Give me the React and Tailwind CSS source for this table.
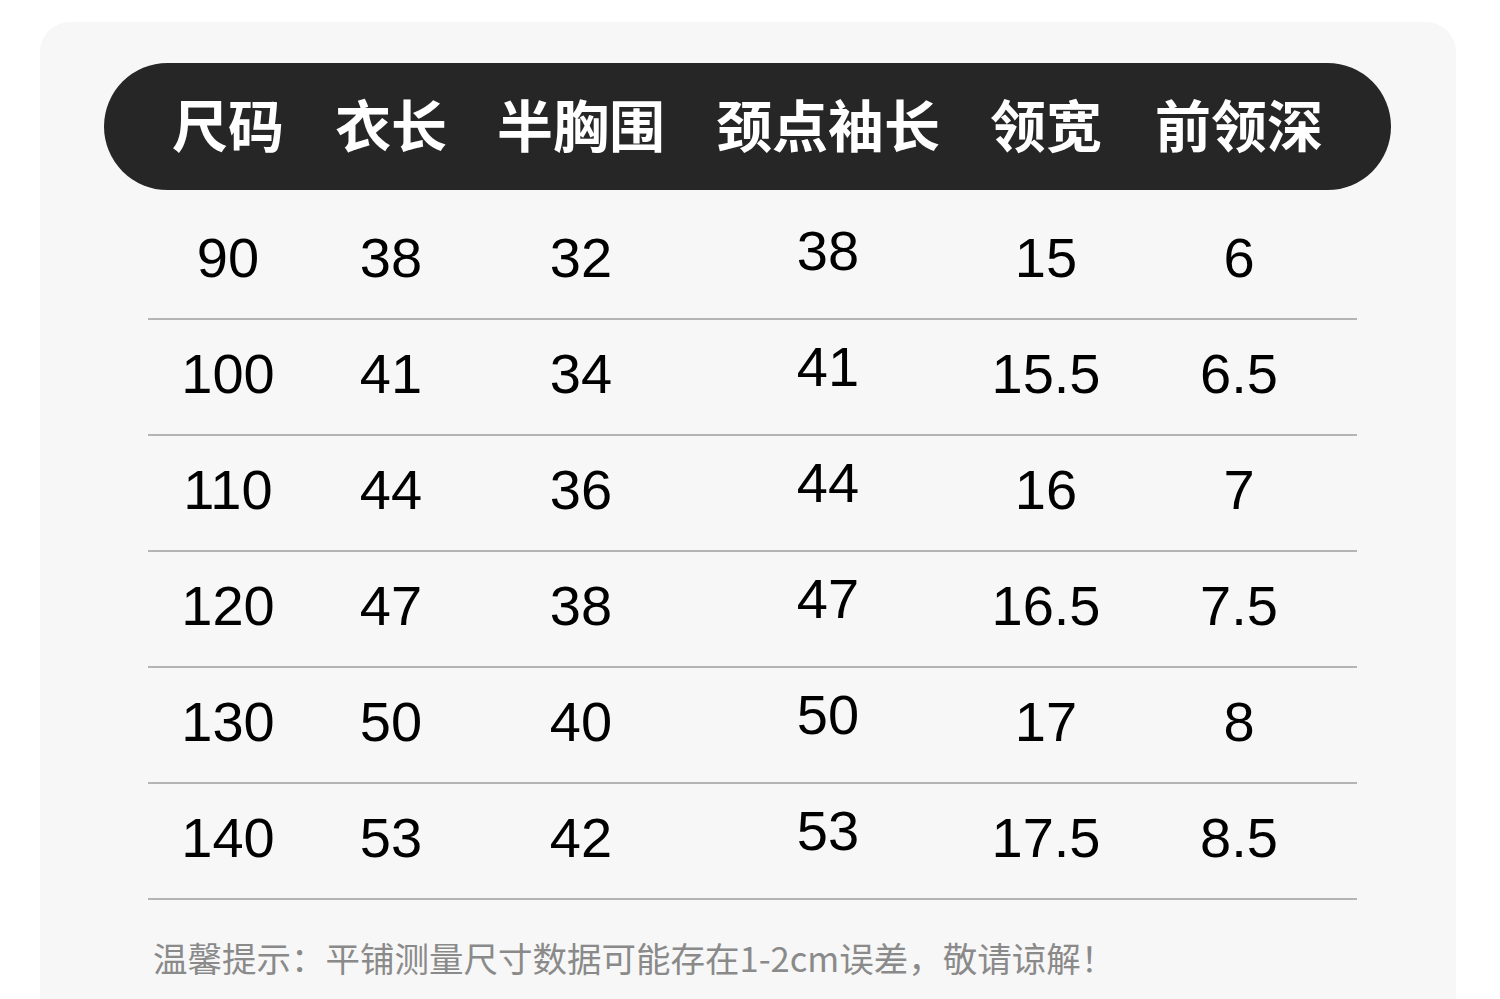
import React from 'react';

const cols = ['w-[160px]', 'w-[166px]', 'w-[214px]', 'w-[280px]', 'w-[156px]', 'w-[230px]'];
const heads = ['尺码', '衣长', '半胸围', '颈点袖长', '领宽', '前领深'];
const rows = [
  ['90', '38', '32', '38', '15', '6'],
  ['100', '41', '34', '41', '15.5', '6.5'],
  ['110', '44', '36', '44', '16', '7'],
  ['120', '47', '38', '47', '16.5', '7.5'],
  ['130', '50', '40', '50', '17', '8'],
  ['140', '53', '42', '53', '17.5', '8.5'],
];

const cjk = { fontFamily: '"Noto Sans CJK SC", "Noto Sans", sans-serif' };

export default function App() {
  return (
    <div className="min-h-screen bg-white pt-[22px] pl-[40px] pr-[44px] overflow-hidden">
      <div className="bg-[#f7f7f7] rounded-t-[30px] h-[1000px] pt-[41px] pl-[64px] pr-[65px]">
        {/* header pill */}
        <div
          className="h-[127px] rounded-full bg-[#262626] flex items-center pl-[44px] pb-[8px] text-white text-[56px] font-bold"
          style={cjk}
        >
          {heads.map((h, i) => (
            <div key={h} className={`${cols[i]} shrink-0 text-center leading-none`}>
              {h}
            </div>
          ))}
        </div>

        {/* size rows */}
        <div className="ml-[44px] w-[1209px] mt-[14px]" style={{ fontFamily: '"Liberation Sans", Arial, sans-serif' }}>
          {rows.map((r) => (
            <div key={r[0]} className="h-[116px] border-b-2 border-[#b4b4b4] flex items-center text-[56px] text-black">
              {r.map((v, i) => (
                <div
                  key={i}
                  className={`${cols[i]} shrink-0 text-center leading-none ${i === 3 ? 'pb-[20px]' : 'pb-[7px]'}`}
                >
                  {v}
                </div>
              ))}
            </div>
          ))}
        </div>

        {/* note */}
        <div className="ml-[49px] mt-[40px] text-[34.5px] text-[#8a8a8a] leading-none whitespace-nowrap" style={cjk}>
          温馨提示：平铺测量尺寸数据可能存在1-2cm误差，敬请谅解！
        </div>
      </div>
    </div>
  );
}
